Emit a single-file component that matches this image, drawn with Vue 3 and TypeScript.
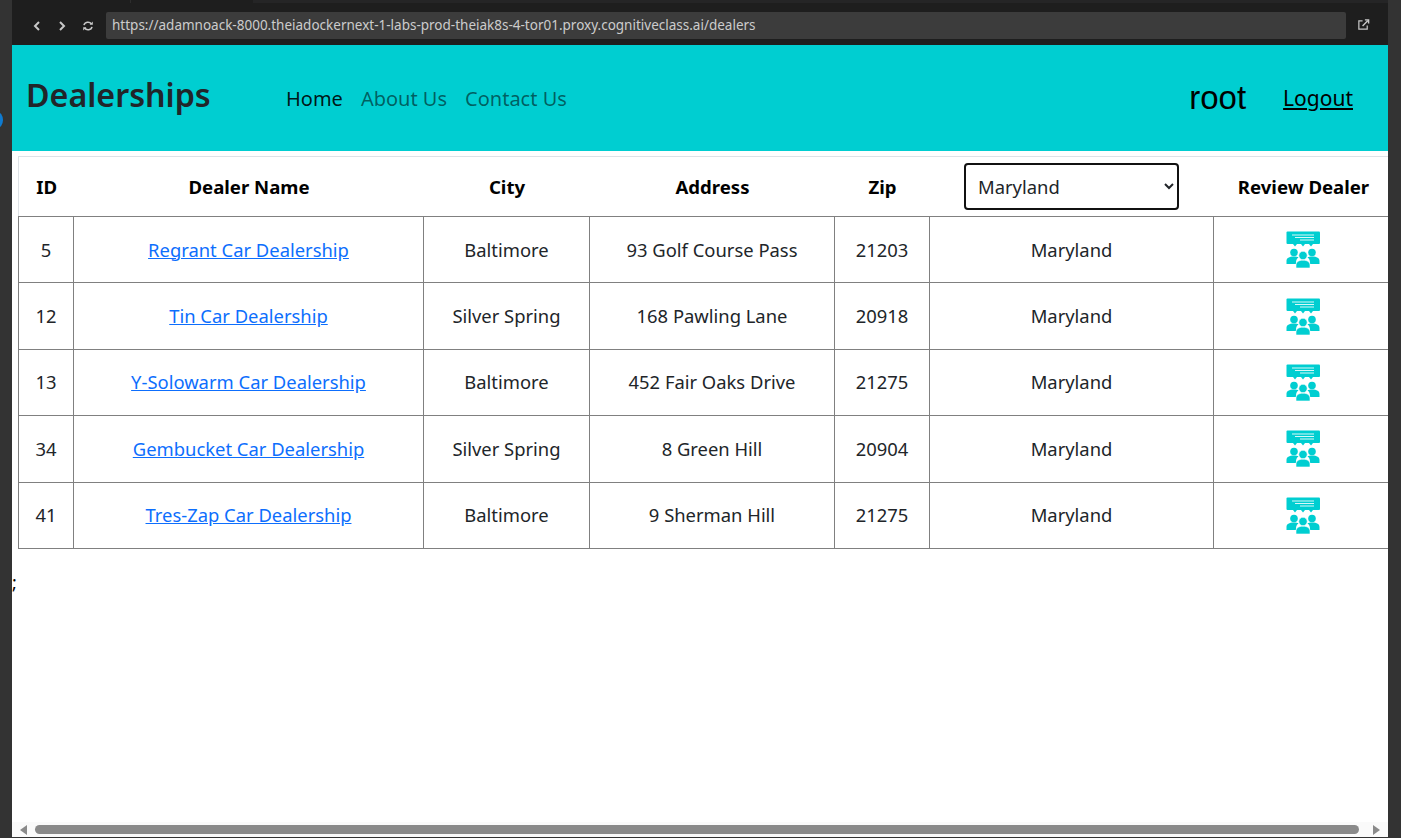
<script setup lang="ts">
interface Dealer { id: number; name: string; city: string; address: string; zip: number }
const dealers: Dealer[] = [
  { id: 5, name: 'Regrant Car Dealership', city: 'Baltimore', address: '93 Golf Course Pass', zip: 21203 },
  { id: 12, name: 'Tin Car Dealership', city: 'Silver Spring', address: '168 Pawling Lane', zip: 20918 },
  { id: 13, name: 'Y-Solowarm Car Dealership', city: 'Baltimore', address: '452 Fair Oaks Drive', zip: 21275 },
  { id: 34, name: 'Gembucket Car Dealership', city: 'Silver Spring', address: '8 Green Hill', zip: 20904 },
  { id: 41, name: 'Tres-Zap Car Dealership', city: 'Baltimore', address: '9 Sherman Hill', zip: 21275 },
]
</script>

<template>
  <div class="window">
    <span class="status-dot"></span>
    <div class="main">
      <div class="tabstrip"><span class="tab"></span><span class="tab wide"></span></div>
      <div class="browserbar">
        <svg class="nav-icon" viewBox="0 0 12 12"><path d="M8 2 4 6l4 4" /></svg>
        <svg class="nav-icon" viewBox="0 0 12 12"><path d="m4 2 4 4-4 4" /></svg>
        <svg class="nav-icon reload" viewBox="0 0 12 12">
          <path d="M2 5.2A4 3.6 0 0 1 9.4 4" />
          <path d="M10 6.8A4 3.6 0 0 1 2.6 8" />
          <path class="solid" d="M7.6 4.8h3.2V1.6zM4.4 7.2H1.2v3.2z" />
        </svg>
        <div class="urlbox">https://adamnoack-8000.theiadockernext-1-labs-prod-theiak8s-4-tor01.proxy.cognitiveclass.ai/dealers</div>
        <svg class="external" viewBox="0 0 14 14">
          <path class="ext-box" d="M6 3H2v9h9V8" />
          <path class="ext-arrow" d="M6 8.5 11.5 3M8.5 2H12.5V6" />
        </svg>
      </div>
      <div class="viewport">
        <nav class="navbar">
          <a class="brand">Dealerships</a>
          <ul class="links">
            <li class="active">Home</li>
            <li>About Us</li>
            <li>Contact Us</li>
          </ul>
          <div class="account">
            <span class="user">root</span>
            <a class="logout">Logout</a>
          </div>
        </nav>
        <div class="content">
          <table class="dealers">
            <colgroup>
              <col class="c1" /><col class="c2" /><col class="c3" /><col class="c4" />
              <col class="c5" /><col class="c6" /><col class="c7" />
            </colgroup>
            <thead>
              <tr>
                <th>ID</th>
                <th>Dealer Name</th>
                <th>City</th>
                <th>Address</th>
                <th>Zip</th>
                <th class="select-cell">
                  <select class="state">
                    <option>Maryland</option>
                  </select>
                </th>
                <th>Review Dealer</th>
              </tr>
            </thead>
            <tbody>
              <tr v-for="d in dealers" :key="d.id">
                <td>{{ d.id }}</td>
                <td><a class="dealer-link">{{ d.name }}</a></td>
                <td>{{ d.city }}</td>
                <td>{{ d.address }}</td>
                <td>{{ d.zip }}</td>
                <td>Maryland</td>
                <td class="icon-cell">
                  <svg class="review" viewBox="0 0 34 37">
                    <rect x="0.5" y="0.5" width="33.500" height="12.500" rx="1" fill="#00ced1" />
                    <path d="M6 4h22M9 6.500h19M14 9h14" stroke="#d8f8f8" stroke-width="1" fill="none" />
                    <path d="M7 13h4l-2 2.500zM15 13h4l-2 2.500zM23 13h4l-2 2.500z" fill="#00ced1" />
                    <circle cx="8" cy="21.500" r="3.800" fill="#00ced1" />
                    <circle cx="26" cy="21.500" r="3.800" fill="#00ced1" />
                    <path d="M0.500 33v-3c0-3 2.500-4.500 7.500-4.500 2 0 3.500.3 4.600.8-1.700 1.200-2.600 3.100-2.600 5.200v1.500zM33.500 33v-3c0-3-2.500-4.500-7.500-4.500-2 0-3.500.3-4.600.8 1.700 1.200 2.600 3.100 2.600 5.200v1.500z" fill="#00ced1" />
                    <circle cx="17" cy="24.500" r="4.200" fill="#00ced1" stroke="#fff" stroke-width="0.600" />
                    <path d="M10 37v-3c0-3 2.500-4.800 7-4.800s7 1.800 7 4.800v3z" fill="#00ced1" stroke="#fff" stroke-width="0.600" />
                  </svg>
                </td>
              </tr>
            </tbody>
          </table>
          <p class="semi">;</p>
        </div>
        <div class="hscroll">
          <span class="arrow left"></span>
          <span class="thumb"></span>
          <span class="arrow right"></span>
        </div>
      </div>
    </div>
  </div>
</template>

<style>
html, body { margin: 0; overflow: hidden; }
</style>

<style scoped>
.window {
  position: relative;
  width: 1401px;
  height: 838px;
  box-sizing: border-box;
  padding: 0 13px 1px 12px;
  background: #333333;
  font-family: "Noto Sans", "Open Sans", sans-serif;
  color: #212529;
  overflow: hidden;
}
.status-dot {
  position: absolute;
  left: -9px;
  top: 112px;
  width: 12px;
  height: 16px;
  border-radius: 50%;
  background: #0e7bd0;
}
.main { display: flex; flex-direction: column; height: 100%; }
.tabstrip { height: 3px; background: #252526; flex: none; display: flex; }
.tab { width: 118px; background: #1e1e1e; border-right: 1px solid #2d2d2d; }
.tab.wide { width: 122px; border-right: 0; }
.browserbar {
  flex: none;
  height: 42px;
  box-sizing: border-box;
  display: flex;
  align-items: center;
  background: #1e1e1e;
  padding: 3px 0 0 19px;
}
.nav-icon { width: 12px; height: 12px; margin-right: 13px; fill: none; stroke: #c8c8c8; stroke-width: 2; flex: none; }
.reload { margin: 0 12px 0 1px; stroke-width: 1.5; }
.reload .solid { fill: #c8c8c8; stroke: none; }
.urlbox {
  flex: none;
  width: 1240px;
  height: 27px;
  line-height: 26px;
  box-sizing: border-box;
  padding-left: 6px;
  background: #3c3c3c;
  border-radius: 2px;
  color: #cccccc;
  font-size: 13.5px;
  white-space: nowrap;
}
.external { width: 13px; height: 13px; margin: -3px 0 0 11px; fill: none; stroke: #c8c8c8; flex: none; }
.ext-box { stroke-width: 1.3; }
.ext-arrow { stroke-width: 1.5; }
.viewport { flex: 1; display: flex; flex-direction: column; background: #fff; min-height: 0; }
.navbar {
  flex: none;
  height: 106px;
  box-sizing: border-box;
  display: flex;
  align-items: center;
  background: #00ced1;
  padding: 0 35px 0 14px;
}
.brand { font-size: 32.2px; font-weight: 600; color: #212529; width: 260px; margin-top: -8px; }
.links { list-style: none; display: flex; gap: 18px; margin: 0; padding: 0; font-size: 20px; color: rgba(0, 0, 0, 0.55); }
.links .active { color: rgba(0, 0, 0, 0.9); }
.account { margin-left: auto; display: flex; align-items: center; gap: 37px; }
.user { font-family: "Liberation Sans", sans-serif; font-size: 33px; color: #000; }
.logout { font-size: 21px; color: #000; text-decoration: underline; }
.content { flex: 1; min-height: 0; padding-top: 5px; overflow: hidden; }
.dealers {
  margin-left: 6px;
  table-layout: fixed;
  width: 1374px;
  border-collapse: collapse;
  font-size: 18.4px;
  text-align: center;
}
.c1 { width: 55px; }
.c2 { width: 350px; }
.c3 { width: 166px; }
.c4 { width: 245px; }
.c5 { width: 95px; }
.c6 { width: 284px; }
.c7 { width: 179px; }
th {
  height: 59px;
  padding: 0 0 0 1px;
  font-size: 18.6px;
  font-weight: 700;
  color: #000;
  border: 1px solid #dee2e6;
  border-width: 1px 0 0 0;
  border-bottom: 1px solid #808080;
}
th.select-cell { padding: 0; }
th:first-child { border-left: 1px solid #dee2e6; }
td {
  height: 66.4px;
  padding: 0 0 1px;
  border: 1px solid #808080;
  border-right-width: 0;
  box-sizing: border-box;
}
td.icon-cell { padding: 0; }
td:first-child { border-left: 1px solid #808080; }
.state {
  display: block;
  box-sizing: border-box;
  width: 215px;
  height: 47px;
  margin: 0 auto;
  padding: 0 0 0 8px;
  border: 2px solid #111;
  border-radius: 4px;
  background: #fff;
  font-family: inherit;
  font-size: 18.4px;
  color: #212529;
}
.dealer-link { color: #0d6efd; text-decoration: underline; }
.review { display: block; width: 34px; height: 37px; margin: 0 auto; }
.semi { margin: 21px 0 0; font-size: 18px; line-height: 24px; color: #000; }
.hscroll {
  flex: none;
  height: 15px;
  display: flex;
  align-items: center;
  padding: 0 8px;
  background: #fafafa;
}
.thumb { flex: none; width: 1324px; height: 9px; margin-left: 8px; border-radius: 5px; background: #8a8a8a; }
.arrow { flex: none; width: 0; height: 0; border-top: 5px solid transparent; border-bottom: 5px solid transparent; }
.arrow.left { border-right: 7px solid #8a8a8a; }
.arrow.right { border-left: 7px solid #8a8a8a; margin-left: auto; }
</style>
